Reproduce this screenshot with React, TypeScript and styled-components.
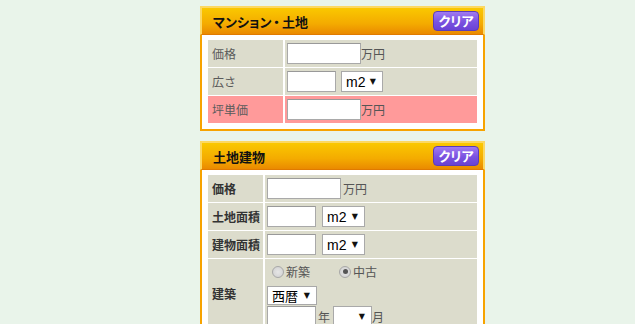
import React from "react";
import styled, { createGlobalStyle } from "styled-components";

const GlobalStyle = createGlobalStyle`
  html, body {
    margin: 0;
    padding: 0;
    background: #e9f4ea;
    font-family: "Noto Sans CJK JP", "Liberation Sans", sans-serif;
  }
`;

const Page = styled.div`
  padding: 6px 0 0 200px;
  display: flex;
  flex-direction: column;
  gap: 10px;
`;

const Panel = styled.section`
  width: 285px;
  box-sizing: border-box;
`;

const Header = styled.div`
  height: 29px;
  box-sizing: border-box;
  display: flex;
  align-items: center;
  justify-content: space-between;
  padding: 0 4px 0 11px;
  border: 2px solid #fcd862;
  border-bottom: 1px solid #e07a00;
  background: linear-gradient(#fac800, #f4ab00 60%, #ea8a00);

  & > h2 {
    margin: 0;
    font-size: 13px;
    font-weight: bold;
    color: #111;
    font-feature-settings: "palt";
  }
`;

const Dot = styled.span`
  margin: 0 2px;
`;

const ClearBtn = styled.button`
  width: 46px;
  height: 20px;
  padding: 0;
  border: 1px solid #5b3cb8;
  border-radius: 4px;
  background: linear-gradient(#a07af2, #7a52e0 55%, #6a42d4);
  color: #fff;
  font-family: "Noto Sans CJK JP", sans-serif;
  font-size: 13px;
  font-weight: bold;
  font-feature-settings: "palt";
  line-height: 18px;
  cursor: pointer;
`;

const Body = styled.div`
  background: #fff;
  border: 2px solid #f7a300;
  border-top: none;
  padding: 4px 4px 5px 4px;
`;

const Table = styled.table`
  width: 100%;
  border-collapse: separate;
  border-spacing: 2px 1px;
`;

const Label = styled.th<{ w: number; strong?: boolean; pink?: boolean }>`
  width: ${(p) => p.w}px;
  height: 27px;
  padding: 0 0 0 4px;
  text-align: left;
  vertical-align: middle;
  font-size: 12px;
  font-weight: ${(p) => (p.strong ? "bold" : "normal")};
  color: ${(p) => (p.strong ? "#333" : "#5a5a5a")};
  background: ${(p) => (p.pink ? "#ff9a9a" : "#dcdccc")};
  white-space: nowrap;
`;

const Value = styled.td<{ pink?: boolean }>`
  height: 27px;
  padding: 0 0 0 2px;
  vertical-align: middle;
  font-size: 12px;
  color: #555;
  background: ${(p) => (p.pink ? "#ff9a9a" : "#dcdccc")};
`;

const Line = styled.div<{ gap?: number }>`
  display: flex;
  align-items: center;
  gap: ${(p) => p.gap ?? 0}px;
`;

const TextBox = styled.input<{ w: number }>`
  width: ${(p) => p.w}px;
  height: 21px;
  box-sizing: border-box;
  margin: 0;
  border: 1px solid #a9a9a9;
  border-top-color: #999;
  background: #fff;
  padding: 0 2px;
`;

const SelectBox = styled.div<{ w: number; h?: number }>`
  width: ${(p) => p.w}px;
  height: ${(p) => p.h ?? 21}px;
  box-sizing: border-box;
  border: 1px solid #a9a9a9;
  background: #fff;
  display: flex;
  align-items: center;
  padding: 0 6px 0 4px;
  color: #000;
`;

const SelectText = styled.span<{ cjk?: boolean }>`
  font-family: ${(p) =>
    p.cjk ? `"Noto Sans CJK JP", sans-serif` : `"Liberation Sans", Arial, sans-serif`};
  font-size: ${(p) => (p.cjk ? 13 : 14)}px;
  line-height: 1;
`;

const Arrow = styled.span`
  font-family: "DejaVu Sans", sans-serif;
  font-size: 8px;
  line-height: 1;
  color: #111;
  margin-left: auto;
`;

const Unit = styled.span<{ ml?: number }>`
  margin-left: ${(p) => p.ml ?? 0}px;
  font-size: 12px;
  color: #555;
`;

const RadioRow = styled.div`
  display: flex;
  align-items: center;
  padding: 4px 0 6px 5px;
`;

const RadioItem = styled.label<{ w: number }>`
  width: ${(p) => p.w}px;
  display: flex;
  align-items: center;
  gap: 2px;
  font-size: 12px;
  color: #555;
`;

const Radio = styled.span<{ checked?: boolean }>`
  width: 12px;
  height: 12px;
  box-sizing: border-box;
  border-radius: 50%;
  border: 1px solid #a8a8a8;
  background: radial-gradient(circle, #e6e6e6, #cfcfcf);
  display: flex;
  align-items: center;
  justify-content: center;

  &::after {
    content: "";
    width: 5px;
    height: 5px;
    border-radius: 50%;
    background: ${(p) => (p.checked ? "#555" : "transparent")};
  }
`;

const Stack = styled.div`
  display: flex;
  flex-direction: column;
  gap: 1px;
`;

function Select({ w, h, text, cjk }: { w: number; h?: number; text: string; cjk?: boolean }) {
  return (
    <SelectBox w={w} h={h}>
      <SelectText cjk={cjk}>{text}</SelectText>
      <Arrow>▼</Arrow>
    </SelectBox>
  );
}

export default function App() {
  return (
    <>
      <GlobalStyle />
      <Page>
        <Panel>
          <Header>
            <h2>
              マンション<Dot>・</Dot>土地
            </h2>
            <ClearBtn>クリア</ClearBtn>
          </Header>
          <Body>
            <Table>
              <tbody>
                <tr>
                  <Label w={71}>価格</Label>
                  <Value>
                    <Line>
                      <TextBox w={74} />
                      <Unit>万円</Unit>
                    </Line>
                  </Value>
                </tr>
                <tr>
                  <Label w={71}>広さ</Label>
                  <Value>
                    <Line gap={5}>
                      <TextBox w={49} />
                      <Select w={42} text="m2" />
                    </Line>
                  </Value>
                </tr>
                <tr>
                  <Label w={71} pink>
                    坪単価
                  </Label>
                  <Value pink>
                    <Line>
                      <TextBox w={74} />
                      <Unit>万円</Unit>
                    </Line>
                  </Value>
                </tr>
              </tbody>
            </Table>
          </Body>
        </Panel>

        <Panel>
          <Header>
            <h2>土地建物</h2>
            <ClearBtn>クリア</ClearBtn>
          </Header>
          <Body>
            <Table>
              <tbody>
                <tr>
                  <Label w={51} strong>
                    価格
                  </Label>
                  <Value>
                    <Line>
                      <TextBox w={74} />
                      <Unit ml={2}>万円</Unit>
                    </Line>
                  </Value>
                </tr>
                <tr>
                  <Label w={51} strong>
                    土地面積
                  </Label>
                  <Value>
                    <Line gap={6}>
                      <TextBox w={49} />
                      <Select w={43} text="m2" />
                    </Line>
                  </Value>
                </tr>
                <tr>
                  <Label w={51} strong>
                    建物面積
                  </Label>
                  <Value>
                    <Line gap={6}>
                      <TextBox w={49} />
                      <Select w={43} text="m2" />
                    </Line>
                  </Value>
                </tr>
                <tr>
                  <Label w={51} strong>
                    建築
                  </Label>
                  <Value>
                    <RadioRow>
                      <RadioItem w={67}>
                        <Radio />
                        新築
                      </RadioItem>
                      <RadioItem w={60}>
                        <Radio checked />
                        中古
                      </RadioItem>
                    </RadioRow>
                    <Stack>
                      <Select w={50} h={19} text="西暦" cjk />
                      <Line>
                        <TextBox w={49} />
                        <Unit ml={2}>年</Unit>
                        <Unit ml={3} />
                        <Select w={39} text="" />
                        <Unit>月</Unit>
                      </Line>
                    </Stack>
                  </Value>
                </tr>
              </tbody>
            </Table>
          </Body>
        </Panel>
      </Page>
    </>
  );
}
